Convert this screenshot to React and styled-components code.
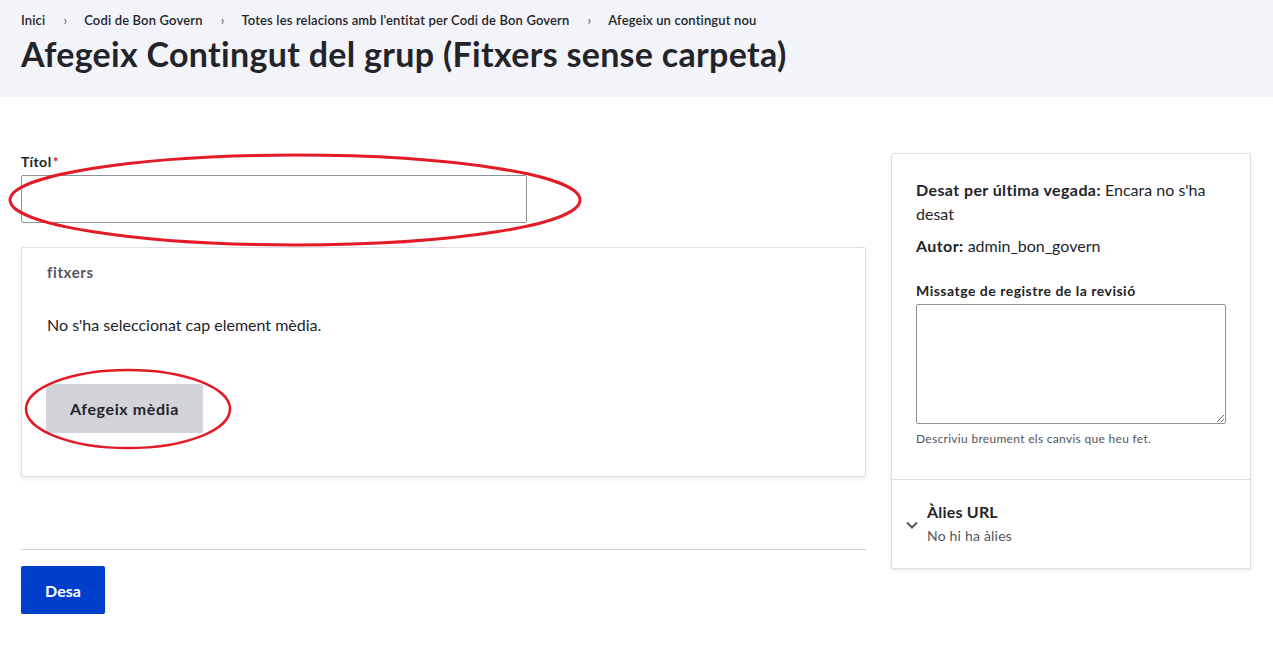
import styled, { createGlobalStyle } from "styled-components";

const Global = createGlobalStyle`
  html, body {
    margin: 0;
    background: #ffffff;
    font-family: Lato, "Noto Sans", sans-serif;
    color: #232429;
  }
  * { box-sizing: border-box; }
`;

const Header = styled.header`
  background: #f3f4f9;
  height: 97px;
  padding: 10px 21px 0;
`;

const Crumbs = styled.ol`
  display: flex;
  align-items: center;
  list-style: none;
  margin: 0;
  padding: 0;
  font-size: 13px;
  font-weight: 600;
  line-height: 20px;
  letter-spacing: 0.15px;
  color: #232429;

  li + li::before {
    content: "›";
    display: inline-block;
    margin: 0 17px 0 18px;
    font-weight: 400;
    color: #55565b;
  }
`;

const Title = styled.h1`
  margin: 4px 0 0;
  font-size: 34px;
  line-height: 40px;
  font-weight: 700;
  letter-spacing: 0.3px;
`;

const Main = styled.main`
  display: grid;
  grid-template-columns: 845px 360px;
  gap: 25px;
  padding: 56px 21px 0;
  align-items: start;
`;

const Column = styled.div`
  display: flex;
  flex-direction: column;
`;

const Label = styled.label`
  display: block;
  font-size: 14px;
  font-weight: 700;
  line-height: 18px;
  letter-spacing: 0.5px;
  margin-bottom: ${(p) => p.$gap || 4}px;

  span {
    color: #d72222;
    margin-left: 1px;
  }
`;

const Annotated = styled.div`
  position: relative;
  width: ${(p) => p.$w || "auto"};
`;

const Ring = styled.svg`
  position: absolute;
  pointer-events: none;
  overflow: visible;
`;

const TextInput = styled.input`
  display: block;
  width: 506px;
  height: 48px;
  border: 1px solid #8e929c;
  border-radius: 2px;
  background: #fff;
`;

const Card = styled.section`
  border: 1px solid #dedfe4;
  border-radius: 2px;
  background: #fff;
  box-shadow: 0 2px 4px rgba(0, 0, 0, 0.08);
`;

const MediaCard = styled(Card)`
  margin-top: 24px;
  padding: 15px 25px 42px;
  height: 230px;
`;

const MediaTitle = styled.h3`
  margin: 0;
  font-size: 15px;
  line-height: 18px;
  font-weight: 700;
  letter-spacing: 0.6px;
  color: #55565b;
`;

const Empty = styled.p`
  margin: 32px 0 0;
  font-size: 16px;
  line-height: 24px;
`;

const GrayButton = styled.button`
  margin: 47px 0 0 -1px;
  width: 157px;
  height: 49px;
  border: none;
  border-radius: 2px;
  background: #d3d4d9;
  color: #232429;
  font-family: inherit;
  font-size: 16px;
  font-weight: 700;
  letter-spacing: 0.6px;
`;

const Divider = styled.hr`
  margin: 72px 0 0;
  border: none;
  border-top: 1px solid #d4d4d8;
`;

const PrimaryButton = styled.button`
  margin-top: 16px;
  width: 84px;
  height: 48px;
  border: none;
  border-radius: 2px;
  background: #003ecc;
  color: #fff;
  font-family: inherit;
  font-size: 16px;
  font-weight: 700;
  box-shadow: 0 1px 2px rgba(0, 0, 0, 0.2);
`;

const SideCard = styled(Card)`
  height: 416px;
`;

const SideBody = styled.div`
  padding: 24px;
  border-bottom: 1px solid #dedfe4;
  height: 326px;
`;

const Meta = styled.p`
  margin: 0 0 ${(p) => p.$mb || 8}px;
  font-size: 16px;
  line-height: 24px;

  b {
    font-weight: 700;
    letter-spacing: 0.4px;
  }
`;

const TextArea = styled.textarea`
  display: block;
  width: 310px;
  height: 120px;
  border: 1px solid #8e929c;
  border-radius: 2px;
  resize: vertical;
  font-family: inherit;
`;

const Help = styled.div`
  margin-top: 7px;
  font-size: 12px;
  line-height: 16px;
  letter-spacing: 0.3px;
  color: #545560;
`;

const Summary = styled.div`
  display: flex;
  align-items: center;
  padding: 20px 24px 20px 13px;
  gap: 8px;

  svg {
    margin-top: 4px;
  }
`;

const SummaryText = styled.div`
  strong {
    display: block;
    font-size: 16px;
    line-height: 24px;
    font-weight: 700;
    letter-spacing: 0.2px;
    color: #232429;
    margin-bottom: 2px;
  }
  span {
    display: block;
    font-size: 14px;
    line-height: 20px;
    letter-spacing: 0.2px;
    color: #55565b;
  }
`;

export default function App() {
  return (
    <>
      <Global />
      <Header>
        <Crumbs>
          <li>Inici</li>
          <li>Codi de Bon Govern</li>
          <li>Totes les relacions amb l'entitat per Codi de Bon Govern</li>
          <li>Afegeix un contingut nou</li>
        </Crumbs>
        <Title>Afegeix Contingut del grup (Fitxers sense carpeta)</Title>
      </Header>
      <Main>
        <Column>
          <Label>
            Títol<span>*</span>
          </Label>
          <Annotated $w="506px">
            <TextInput />
            <Ring
              width="576"
              height="96"
              style={{ left: -14, top: -23 }}
              viewBox="0 0 576 96"
            >
              <ellipse
                cx="288"
                cy="48"
                rx="285"
                ry="45"
                fill="none"
                stroke="#e21b27"
                strokeWidth="3"
              />
            </Ring>
          </Annotated>
          <MediaCard>
            <MediaTitle>fitxers</MediaTitle>
            <Empty>No s'ha seleccionat cap element mèdia.</Empty>
            <Annotated $w="157px">
              <GrayButton>Afegeix mèdia</GrayButton>
              <Ring
                width="208"
                height="82"
                style={{ left: -23, top: 31 }}
                viewBox="0 0 208 82"
              >
                <ellipse
                  cx="104"
                  cy="41"
                  rx="102"
                  ry="39"
                  fill="none"
                  stroke="#e21b27"
                  strokeWidth="2.5"
                />
              </Ring>
            </Annotated>
          </MediaCard>
          <Divider />
          <div>
            <PrimaryButton>Desa</PrimaryButton>
          </div>
        </Column>
        <SideCard>
          <SideBody>
            <Meta>
              <b>Desat per última vegada:</b> Encara no s'ha desat
            </Meta>
            <Meta $mb={24}>
              <b>Autor:</b> admin_bon_govern
            </Meta>
            <Label $gap={4}>Missatge de registre de la revisió</Label>
            <TextArea />
            <Help>Descriviu breument els canvis que heu fet.</Help>
          </SideBody>
          <Summary>
            <svg width="14" height="14" viewBox="0 0 14 14">
              <path
                d="M2 4.5 L7 9.5 L12 4.5"
                fill="none"
                stroke="#55565b"
                strokeWidth="2"
              />
            </svg>
            <SummaryText>
              <strong>Àlies URL</strong>
              <span>No hi ha àlies</span>
            </SummaryText>
          </Summary>
        </SideCard>
      </Main>
    </>
  );
}
